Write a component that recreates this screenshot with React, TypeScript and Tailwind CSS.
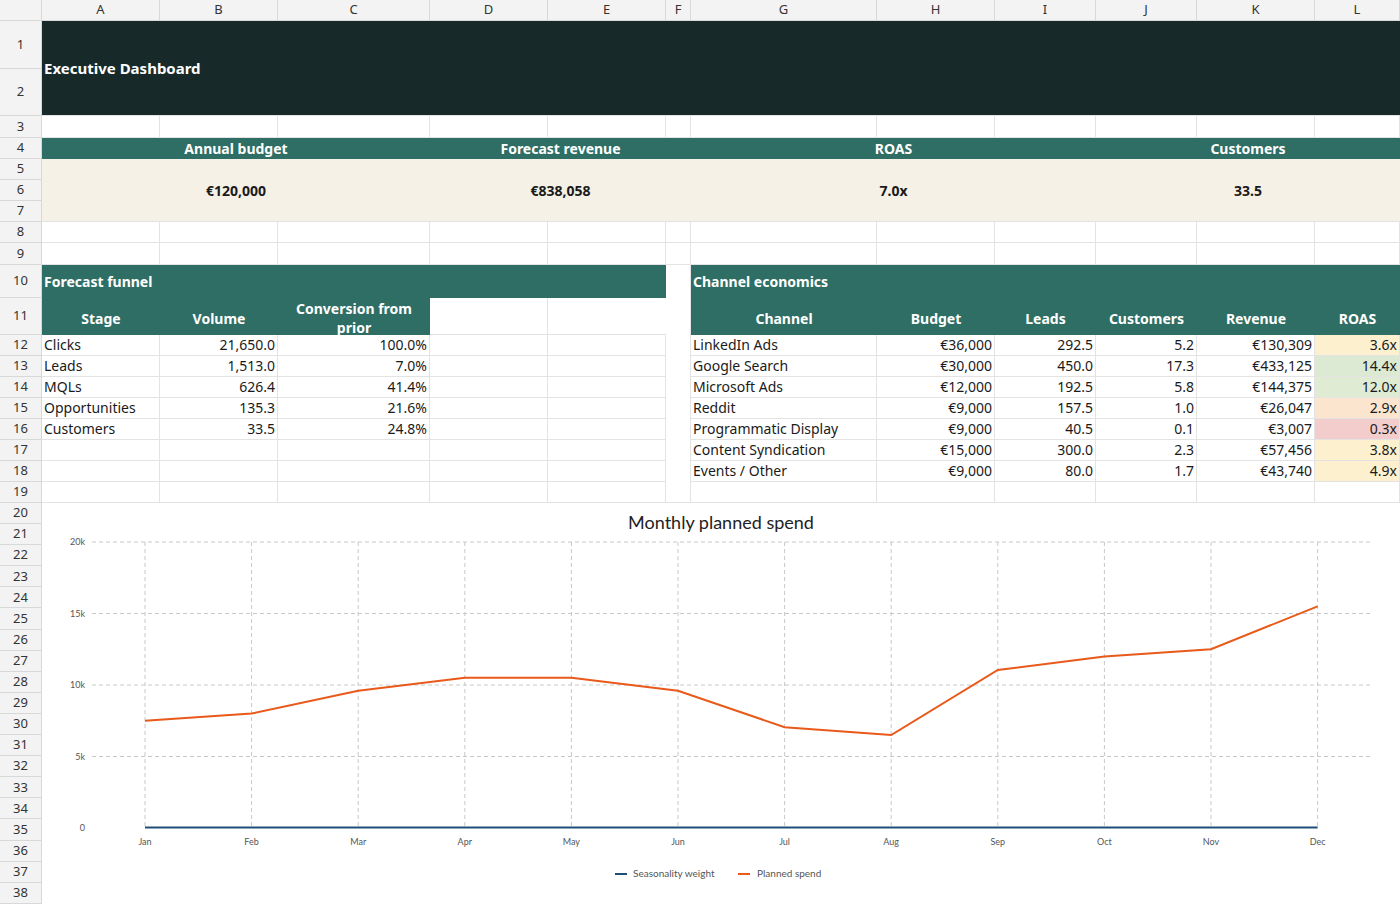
import React from 'react';

const font = "font-['Lato','Carlito','Liberation_Sans',sans-serif]";
const cols = ['A', 'B', 'C', 'D', 'E', 'F', 'G', 'H', 'I', 'J', 'K', 'L'];
const colW = ['w-[118px]', 'w-[118px]', 'w-[152px]', 'w-[118px]', 'w-[118px]', 'w-[25px]', 'w-[186px]', 'w-[118px]', 'w-[101px]', 'w-[101px]', 'w-[118px]', 'w-[85px]'];

const rowNums: [string, string][] = [
  ['1', 'h-[48px]'], ['2', 'h-[47px]'], ['3', 'h-[22px]'], ['4', 'h-[21px]'], ['5', 'h-[21px]'], ['6', 'h-[21px]'], ['7', 'h-[21px]'],
  ['8', 'h-[21px]'], ['9', 'h-[22px]'], ['10', 'h-[33px]'], ['11', 'h-[37px]'],
  ...Array.from({ length: 8 }, (_, i) => [String(12 + i), 'h-[21px]'] as [string, string]),
  ...Array.from({ length: 19 }, (_, i) => [String(20 + i), 'h-[21.1px]'] as [string, string]),
];

function EmptyRow({ h }: { h: string }) {
  return (
    <div className={`flex ${h}`}>
      {colW.map((w, i) => (
        <div key={i} className={`${w} shrink-0 border-r border-b border-[#e3e3e3]`} />
      ))}
    </div>
  );
}

const funnel = [
  ['Clicks', '21,650.0', '100.0%'],
  ['Leads', '1,513.0', '7.0%'],
  ['MQLs', '626.4', '41.4%'],
  ['Opportunities', '135.3', '21.6%'],
  ['Customers', '33.5', '24.8%'],
  ['', '', ''],
  ['', '', ''],
  ['', '', ''],
];

const channels = [
  ['LinkedIn Ads', '€36,000', '292.5', '5.2', '€130,309', '3.6x', 'bg-[#fdf0cf]'],
  ['Google Search', '€30,000', '450.0', '17.3', '€433,125', '14.4x', 'bg-[#dcead3]'],
  ['Microsoft Ads', '€12,000', '192.5', '5.8', '€144,375', '12.0x', 'bg-[#e0ebd4]'],
  ['Reddit', '€9,000', '157.5', '1.0', '€26,047', '2.9x', 'bg-[#fbe5cf]'],
  ['Programmatic Display', '€9,000', '40.5', '0.1', '€3,007', '0.3x', 'bg-[#f3cccc]'],
  ['Content Syndication', '€15,000', '300.0', '2.3', '€57,456', '3.8x', 'bg-[#fdf0cf]'],
  ['Events / Other', '€9,000', '80.0', '1.7', '€43,740', '4.9x', 'bg-[#fdf0cf]'],
  ['', '', '', '', '', '', ''],
];

const cell = 'shrink-0 border-r border-b border-[#e3e3e3] px-[2px] leading-[20px] whitespace-nowrap overflow-hidden';

function Chart() {
  const vals = [7.5, 8, 9.6, 10.5, 10.5, 9.6, 7.05, 6.5, 11.05, 12, 12.5, 15.5];
  const months = ['Jan', 'Feb', 'Mar', 'Apr', 'May', 'Jun', 'Jul', 'Aug', 'Sep', 'Oct', 'Nov', 'Dec'];
  const x = (i: number) => 103 + i * 106.6;
  const y = (v: number) => 325 - v * 14.3;
  const pts = vals.map((v, i) => `${x(i)},${y(v)}`).join(' ');
  return (
    <svg width="1358" height="401" viewBox="0 0 1358 401" className="block">
      <text x="679" y="26" textAnchor="middle" fontSize="18" fill="#222" fontFamily="Lato, sans-serif">Monthly planned spend</text>
      {[0, 5, 10, 15, 20].map((k) => (
        <g key={k}>
          {k > 0 && <line x1="50" x2="1330" y1={y(k)} y2={y(k)} stroke="#c8c8c8" strokeDasharray="4 3" />}
          <text x="43" y={y(k) + 3} textAnchor="end" fontSize="9" fill="#555" fontFamily="Lato, sans-serif">{k === 0 ? '0' : `${k}k`}</text>
        </g>
      ))}
      {months.map((m, i) => (
        <g key={m}>
          <line x1={x(i)} x2={x(i)} y1={y(20)} y2="325" stroke="#c8c8c8" strokeDasharray="4 3" />
          <text x={x(i)} y="342" textAnchor="middle" fontSize="9" fill="#555" fontFamily="Lato, sans-serif">{m}</text>
        </g>
      ))}
      <line x1={x(0)} x2={x(11)} y1="324.5" y2="324.5" stroke="#1f4e79" strokeWidth="2" />
      <polyline points={pts} fill="none" stroke="#e8591a" strokeWidth="2" />
      <line x1="573" x2="585" y1="371" y2="371" stroke="#1f4e79" strokeWidth="2" />
      <text x="591" y="374" fontSize="10" fill="#555" fontFamily="Lato, sans-serif">Seasonality weight</text>
      <line x1="696" x2="708" y1="371" y2="371" stroke="#e8591a" strokeWidth="2" />
      <text x="715" y="374" fontSize="10" fill="#555" fontFamily="Lato, sans-serif">Planned spend</text>
    </svg>
  );
}

export default function App() {
  return (
    <div className={`${font} w-[1400px] h-[904px] overflow-hidden bg-white text-[14px] text-[#1a1a1a]`}>
      {/* column header */}
      <div className="flex h-[21px] bg-[#f3f3f3] text-[#333] text-[13px] font-['Liberation_Sans',sans-serif]">
        <div className="w-[42px] shrink-0 border-r border-b border-[#d8d8d8]" />
        {cols.map((c, i) => (
          <div key={c} className={`${colW[i]} shrink-0 border-r border-b border-[#d8d8d8] flex items-center justify-center`}>{c}</div>
        ))}
      </div>
      <div className="flex">
        {/* row numbers */}
        <div className="w-[42px] shrink-0 bg-[#f3f3f3] text-[13px] text-[#333] font-['Liberation_Sans',sans-serif]">
          {rowNums.map(([n, h]) => (
            <div key={n} className={`${h} border-r border-b border-[#d8d8d8] flex items-center justify-center`}>{n}</div>
          ))}
        </div>
        <div className="w-[1358px] flex flex-col">
          <div className="h-[95px] bg-[#18292a] text-white font-bold text-[15px] flex items-center px-[2px] border-b border-[#e3e3e3]">Executive Dashboard</div>
          <EmptyRow h="h-[22px]" />
          <div className="flex h-[21px] bg-[#2e6e64] text-white font-bold">
            <div className="w-[388px] text-center leading-[21px]">Annual budget</div>
            <div className="w-[261px] text-center leading-[21px]">Forecast revenue</div>
            <div className="w-[405px] text-center leading-[21px]">ROAS</div>
            <div className="w-[304px] text-center leading-[21px]">Customers</div>
          </div>
          <div className="flex h-[63px] bg-[#f5f1e6] font-bold border-b border-[#e3e3e3]">
            <div className="w-[388px] flex items-center justify-center">€120,000</div>
            <div className="w-[261px] flex items-center justify-center">€838,058</div>
            <div className="w-[405px] flex items-center justify-center">7.0x</div>
            <div className="w-[304px] flex items-center justify-center">33.5</div>
          </div>
          <EmptyRow h="h-[21px]" />
          <EmptyRow h="h-[22px]" />
          {/* tables */}
          <div className="flex">
            <div className="w-[624px] shrink-0">
              <div className="h-[33px] bg-[#2e6e64] text-white font-bold flex items-center px-[2px]">Forecast funnel</div>
              <div className="flex h-[37px]">
                <div className="w-[388px] flex bg-[#2e6e64] text-white font-bold">
                  <div className="w-[118px] flex items-center justify-center pt-[3px]">Stage</div>
                  <div className="w-[118px] flex items-center justify-center pt-[3px]">Volume</div>
                  <div className="w-[152px] text-center leading-[19px] pt-[1px]">Conversion from prior<br />stage</div>
                </div>
                <div className="w-[118px] border-r border-b border-[#e3e3e3]" />
                <div className="w-[118px] border-b border-[#e3e3e3]" />
              </div>
              {funnel.map((r, i) => (
                <div key={i} className="flex h-[21px]">
                  <div className={`${cell} w-[118px]`}>{r[0]}</div>
                  <div className={`${cell} w-[118px] text-right`}>{r[1]}</div>
                  <div className={`${cell} w-[152px] text-right`}>{r[2]}</div>
                  <div className={`${cell} w-[118px]`} />
                  <div className={`${cell} w-[118px]`} />
                </div>
              ))}
            </div>
            <div className="w-[25px] shrink-0 border-r border-b border-[#e3e3e3]" />
            <div className="w-[709px] shrink-0">
              <div className="h-[33px] bg-[#2e6e64] text-white font-bold flex items-center px-[2px]">Channel economics</div>
              <div className="flex h-[37px] bg-[#2e6e64] text-white font-bold pt-[3px]">
                {['Channel', 'Budget', 'Leads', 'Customers', 'Revenue', 'ROAS'].map((h, i) => (
                  <div key={h} className={`${['w-[186px]', 'w-[118px]', 'w-[101px]', 'w-[101px]', 'w-[118px]', 'w-[85px]'][i]} flex items-center justify-center`}>{h}</div>
                ))}
              </div>
              {channels.map((r, i) => (
                <div key={i} className="flex h-[21px]">
                  <div className={`${cell} w-[186px]`}>{r[0]}</div>
                  <div className={`${cell} w-[118px] text-right`}>{r[1]}</div>
                  <div className={`${cell} w-[101px] text-right`}>{r[2]}</div>
                  <div className={`${cell} w-[101px] text-right`}>{r[3]}</div>
                  <div className={`${cell} w-[118px] text-right`}>{r[4]}</div>
                  <div className={`${cell} w-[85px] text-right ${r[6]}`}>{r[5]}</div>
                </div>
              ))}
            </div>
          </div>
          <Chart />
        </div>
      </div>
    </div>
  );
}
